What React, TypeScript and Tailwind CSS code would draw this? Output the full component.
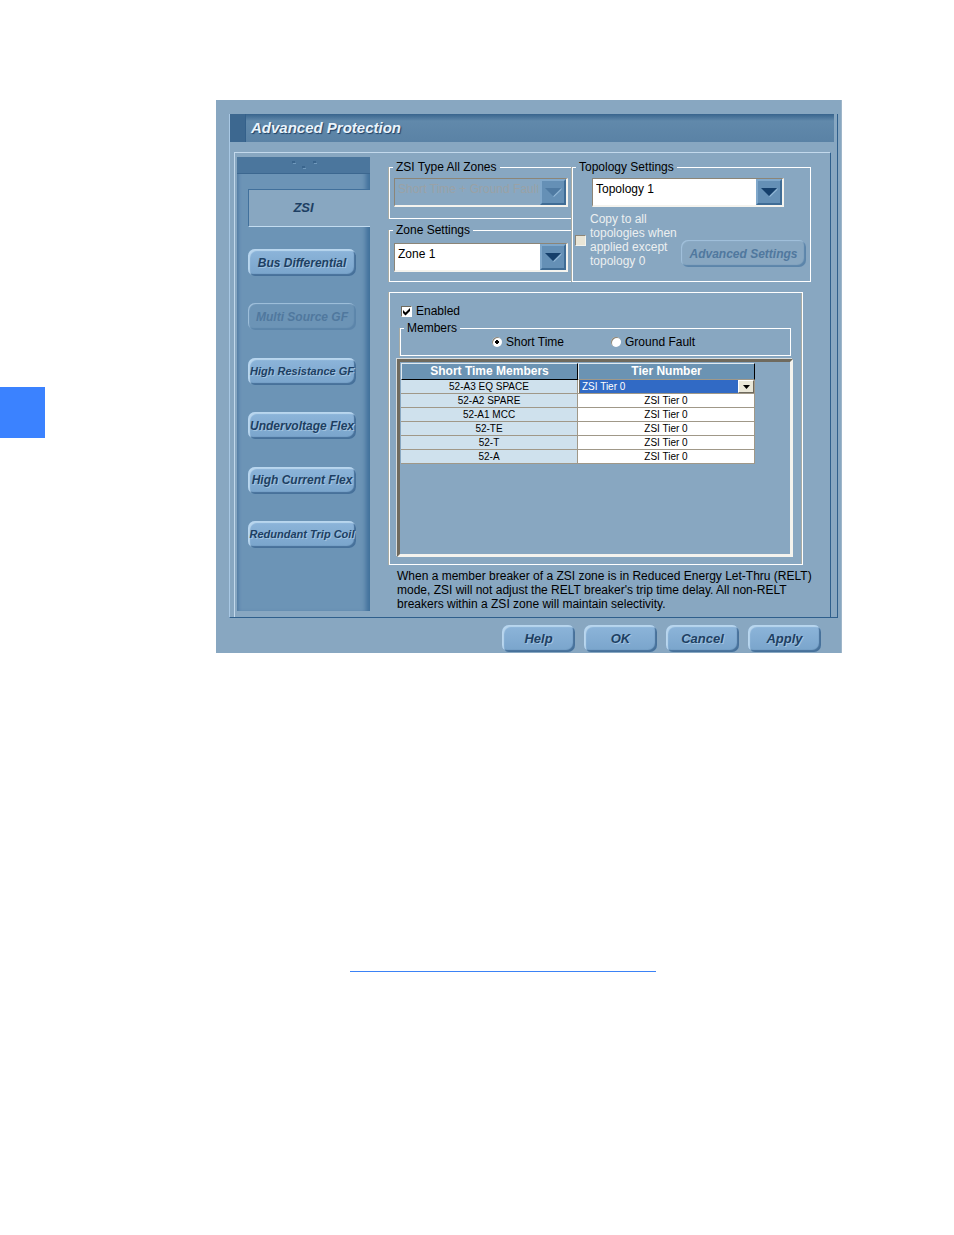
import React from "react";
import clsx from "clsx";

const navItems = [
  { label: "Bus Differential", small: false },
  { label: "Multi Source GF", small: false, disabled: true },
  { label: "High Resistance GF", small: true },
  { label: "Undervoltage Flex", small: false },
  { label: "High Current Flex", small: false },
  { label: "Redundant Trip Coil", small: true },
];

const members = ["52-A3 EQ SPACE", "52-A2 SPARE", "52-A1 MCC", "52-TE", "52-T", "52-A"];

function PushButton({
  children,
  disabled,
  className,
}: {
  children: React.ReactNode;
  disabled?: boolean;
  className?: string;
}) {
  return (
    <button
      type="button"
      disabled={disabled}
      className={clsx(
        "flex h-[27px] items-center justify-center rounded-[7px] font-bold italic whitespace-nowrap",
        disabled
          ? "text-[#50789e] shadow-[inset_1px_1px_1px_#a3c2dd,inset_-2px_-2px_1px_#5c85aa]"
          : "bg-linear-to-b from-[#8db5da] to-[#79a4cb] text-[#1d3f63] shadow-[inset_2px_2px_1px_#b9d6ee,inset_-2px_-2px_1px_#47719a] [text-shadow:1px_1px_0_#a3c4e0]",
        className,
      )}
    >
      {children}
    </button>
  );
}

function Combo({ label, value, disabled }: { label: string; value: string; disabled?: boolean }) {
  return (
    <div className="relative h-[29px] w-full">
      <select
        aria-label={label}
        disabled={disabled}
        className={clsx(
          "block h-full w-full appearance-none border-t border-r-2 border-b-2 border-l border-t-[#8c8577] border-r-[#f4f3ee] border-b-[#f4f3ee] border-l-[#8c8577] pr-[28px] pb-[6px] pl-[3px] text-[12px] leading-4 opacity-100",
          disabled ? "bg-[#88a7c1] text-[#9aa2a6]" : "bg-white text-black",
        )}
      >
        <option>{value}</option>
      </select>
      <span className="pointer-events-none absolute top-px right-[2px] bottom-[2px] flex w-[26px] items-center justify-center border-2 border-t-[#80a8cb] border-r-[#3f6c95] border-b-[#3f6c95] border-l-[#80a8cb] bg-[#6590b6]">
        <svg width="17" height="9" viewBox="0 0 17 9" aria-hidden="true">
          <path d="M8.500 8.800 16.500 1" stroke="#a6c8e4" fill="none" />
          <path d="M0 0h16L8 8z" fill={disabled ? "#4f7aa2" : "#153f6b"} />
        </svg>
      </span>
    </div>
  );
}

const group = "min-w-0 border border-white shadow-[-1px_0_0_#a9aca4]";
const legend = "ml-[3px] px-[3px] text-[12px] leading-[14px]";

export default function App() {
  return (
    <main className="min-h-screen bg-white font-['Liberation_Sans',Arial,sans-serif] text-black">
      <div className="flex items-start">
        <aside className="mt-[387px] h-[51px] w-[45px] shrink-0 bg-[#3b82ff]" />
        <section className="mt-[100px] mr-[112px] ml-[171px] min-w-0 flex-1 bg-[#88a7c1] pt-[14px] pr-[4px] pl-[13px] shadow-[inset_-1px_0_0_#9fb6c9]">
          <div className="border-r border-b border-l border-r-[#2f5f8c] border-b-[#2f5f8c] border-l-[#a9c8e4]">
            <header className="mr-[3px] flex h-[28px] items-stretch bg-linear-to-b from-[#38648d] via-[#6189ab] via-25% to-[#5a82a5]">
              <span className="w-[16px] border-r border-[#34608a] bg-[#3d6890]" />
              <h1 className="pl-[5px] text-[15px] leading-[27px] font-bold text-[#eaf4fc] italic [text-shadow:1px_1px_1px_#1d4065]">
                Advanced Protection
              </h1>
            </header>
            <div className="mt-[10px] mr-[6px] ml-[4px] flex border-t border-r border-l border-t-[#c3d9ec] border-r-[#2f5f8c] border-l-[#c3d9ec] pt-[4px] pb-[6px] pl-[2px]">
              <nav className="flex h-[454px] w-[133px] shrink-0 flex-col bg-[#6c94b6] shadow-[inset_-7px_0_5px_-3px_#41709b,inset_4px_0_3px_-2px_#557fa6]">
                <div className="flex h-[17px] items-center justify-center border-b border-[#3c678f] bg-[#4b769d]">
                  <svg width="28" height="10" viewBox="0 0 28 10" aria-hidden="true">
                    <path d="M2 1h3v2H2zM12 6h3v2h-3zM23 1h3v2h-3z" fill="#3a658d" />
                    <path d="M3 3h3v1H3zM13 8h3v1h-3zM24 3h3v1h-3z" fill="#6f98bc" />
                  </svg>
                </div>
                <button
                  type="button"
                  className="mt-[15px] ml-[11px] h-[38px] border-t border-b border-l border-t-[#41709b] border-b-[#c3dcf0] border-l-[#41709b] bg-[#88a7c1] pr-[12px] text-[13px] font-bold text-[#1d3f63] italic"
                >
                  ZSI
                </button>
                <div className="mt-[22px] ml-[11px] flex h-[299px] w-[108px] flex-col justify-between">
                  {navItems.map((item) => (
                    <PushButton
                      key={item.label}
                      disabled={item.disabled}
                      className={item.small ? "text-[11px]" : "text-[12px]"}
                    >
                      {item.label}
                    </PushButton>
                  ))}
                </div>
              </nav>

              <div className="min-w-0 flex-1 pr-[19px] pl-[19px]">
                <div className="flex items-stretch pt-[3px]">
                  <div className="flex w-[183px] shrink-0 flex-col justify-between">
                    <fieldset className={clsx(group, "h-[59px] border-r-0")}>
                      <legend className={legend}>ZSI Type All Zones</legend>
                      <div className="px-[4px] pt-[4px]">
                        <Combo label="ZSI Type All Zones" value="Short Time + Ground Fault" disabled />
                      </div>
                    </fieldset>
                    <fieldset className={clsx(group, "h-[59px] border-r-0")}>
                      <legend className={legend}>Zone Settings</legend>
                      <div className="px-[4px] pt-[6px]">
                        <Combo label="Zone Settings" value="Zone 1" />
                      </div>
                    </fieldset>
                  </div>
                  <fieldset className={clsx(group, "h-[122px] flex-1")}>
                    <legend className={legend}>Topology Settings</legend>
                    <div className="pt-[4px] pr-[26px] pl-[19px]">
                      <Combo label="Topology Settings" value="Topology 1" />
                    </div>
                    <div className="mt-[5px] flex items-start pr-[4px]">
                      <label className="flex flex-1 items-center gap-[4px] text-[12px] leading-[14px] whitespace-nowrap text-[#eceff0]">
                        <input
                          type="checkbox"
                          disabled
                          className="ml-[2px] size-[11px] shrink-0 appearance-none border border-t-[#8c8577] border-r-[#f4f3ee] border-b-[#f4f3ee] border-l-[#8c8577] bg-[#e9e5d6]"
                        />
                        <span>
                          Copy to all
                          <br />
                          topologies when
                          <br />
                          applied except
                          <br />
                          topology 0
                        </span>
                      </label>
                      <PushButton disabled className="mt-[28px] w-[125px] text-[12px]">
                        Advanced Settings
                      </PushButton>
                    </div>
                  </fieldset>
                </div>

                <div className="mt-[10px] mr-[8px] border border-white px-[7px] pt-[11px] pb-[7px] shadow-[-1px_0_0_#a9aca4,inset_-1px_0_0_#a9aca4]">
                  <label className="flex items-center gap-[4px] pl-[4px] text-[12px] leading-[14px]">
                    <span className="relative flex size-[11px]">
                      <input
                        type="checkbox"
                        defaultChecked
                        className="size-[11px] appearance-none border border-t-[#6f6a5e] border-r-white border-b-white border-l-[#6f6a5e] bg-white"
                      />
                      <svg
                        className="pointer-events-none absolute inset-0"
                        width="11"
                        height="11"
                        viewBox="0 0 11 11"
                        aria-hidden="true"
                      >
                        <path d="M2 4v3l2.500 2.500L9 5V2L4.500 6.500z" fill="#000" />
                      </svg>
                    </span>
                    Enabled
                  </label>
                  <fieldset className={clsx(group, "mt-[3px] mr-[4px] ml-[3px] h-[35px]")}>
                    <legend className={legend}>Members</legend>
                    <div className="flex h-[14px] items-center gap-[47px] pl-[91px] text-[12px] leading-[14px]">
                      <label className="flex items-center gap-[4px]">
                        <input
                          type="radio"
                          name="member"
                          defaultChecked
                          className="size-[10px] appearance-none rounded-full bg-white bg-[radial-gradient(circle,#000_2px,#fff_2px)] shadow-[inset_1px_1px_0_#8c8577]"
                        />
                        Short Time
                      </label>
                      <label className="flex items-center gap-[4px]">
                        <input
                          type="radio"
                          name="member"
                          className="size-[10px] appearance-none rounded-full bg-white shadow-[inset_1px_1px_0_#8c8577]"
                        />
                        Ground Fault
                      </label>
                    </div>
                  </fieldset>
                  <div className="mt-[3px] mr-[2px] h-[198px] border-3 border-t-[#6f6a5e] border-r-[#f4f3ee] border-b-[#f4f3ee] border-l-[#6f6a5e] pt-px pl-px shadow-[-1px_-1px_0_#d8dcdc]">
                    <table className="w-[354px] table-fixed border-separate border-spacing-0 text-center text-[10px] leading-[13px]">
                      <thead>
                        <tr className="h-[17px] bg-[#6b93b3] text-[12px] text-white">
                          <th className="border border-t-[#dfe9f0] border-r-black border-b-black border-l-[#dfe9f0] p-0 leading-[15px]">
                            Short Time Members
                          </th>
                          <th className="border border-t-[#dfe9f0] border-r-black border-b-[#a09888] border-l-[#dfe9f0] p-0 leading-[15px]">
                            Tier Number
                          </th>
                        </tr>
                      </thead>
                      <tbody>
                        {members.map((name, i) => (
                          <tr key={name} className="h-[14px]">
                            <td className="border-r border-b border-[#a09888] bg-[#cfe1ed] p-0">{name}</td>
                            <td className="border-r border-b border-[#a09888] bg-white p-0">
                              {i === 0 ? (
                                <div className="relative ml-px h-[13px]">
                                  <select
                                    aria-label="Tier Number"
                                    className="block h-[13px] w-full appearance-none border-l border-[#6f6a5e] bg-[#316ac5] pl-[2px] text-[10px] leading-[13px] text-white"
                                  >
                                    <option>ZSI Tier 0</option>
                                  </select>
                                  <span className="pointer-events-none absolute top-0 right-0 flex h-[13px] w-[16px] items-center justify-center border border-t-white border-r-[#6f6a5e] border-b-[#6f6a5e] border-l-white bg-[#ebe8d9]">
                                    <svg width="7" height="4" viewBox="0 0 7 4" aria-hidden="true">
                                      <path d="M0 0h7L3.500 4z" fill="#000" />
                                    </svg>
                                  </span>
                                </div>
                              ) : (
                                "ZSI Tier 0"
                              )}
                            </td>
                          </tr>
                        ))}
                      </tbody>
                    </table>
                  </div>
                </div>

                <p className="mt-[4px] pl-[8px] text-[12px] leading-[14px] whitespace-nowrap">
                  When a member breaker of a ZSI zone is in Reduced Energy Let-Thru (RELT)
                  <br />
                  mode, ZSI will not adjust the RELT breaker's trip time delay. All non-RELT
                  <br />
                  breakers within a ZSI zone will maintain selectivity.
                </p>
              </div>
            </div>
          </div>
          <footer className="flex justify-end gap-[9px] pt-[7px] pr-[17px] pb-px">
            {["Help", "OK", "Cancel", "Apply"].map((label) => (
              <PushButton key={label} className="w-[73px] text-[13px]">
                {label}
              </PushButton>
            ))}
          </footer>
        </section>
      </div>
      <hr className="mt-[318px] ml-[350px] w-[306px] border-t border-[#3b82f6]" />
    </main>
  );
}
